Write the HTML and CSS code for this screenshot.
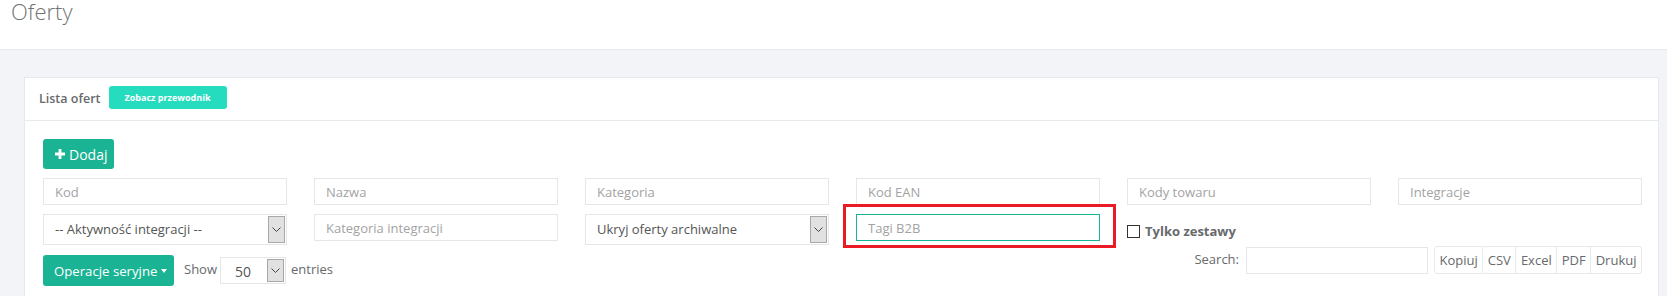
FILE: index.html
```html
<!DOCTYPE html>
<html lang="pl">
<head>
    <meta charset="UTF-8">
    <title>Oferty</title>
    <link rel="stylesheet" href="styles.css">
</head>
<body>

<!-- Page heading -->
<div class="page-heading">
    <h1>Oferty</h1>
</div>

<div class="wrapper">
    <div class="ibox">
        <div class="ibox-title">
            <h5>Lista ofert</h5>
            <button class="btn-guide">Zobacz przewodnik</button>
        </div>

        <div class="ibox-content">
            <button class="btn btn-primary btn-add">
                <svg class="icon-plus" width="10" height="10" viewBox="0 0 10 10"><path d="M3.6 0h2.8v3.6H10v2.8H6.4V10H3.6V6.4H0V3.6h3.6z" fill="#fff"/></svg>
                Dodaj
            </button>

            <!-- Filters -->
            <div class="filters">
                <input class="form-control" type="text" placeholder="Kod">
                <input class="form-control" type="text" placeholder="Nazwa">
                <input class="form-control" type="text" placeholder="Kategoria">
                <input class="form-control" type="text" placeholder="Kod EAN">
                <input class="form-control" type="text" placeholder="Kody towaru">
                <input class="form-control" type="text" placeholder="Integracje">

                <div class="select">
                    <span class="select-value">-- Aktywność integracji --</span>
                    <span class="select-arrow"><svg width="9" height="5" viewBox="0 0 9 5"><path d="M0.5 0.5l4 4 4-4" fill="none" stroke="#444" stroke-width="1"/></svg></span>
                </div>
                <input class="form-control" type="text" placeholder="Kategoria integracji">
                <div class="select">
                    <span class="select-value">Ukryj oferty archiwalne</span>
                    <span class="select-arrow"><svg width="9" height="5" viewBox="0 0 9 5"><path d="M0.5 0.5l4 4 4-4" fill="none" stroke="#444" stroke-width="1"/></svg></span>
                </div>
                <div class="highlight-cell">
                    <input class="form-control focused" type="text" placeholder="Tagi B2B">
                    <div class="highlight"></div>
                </div>
                <label class="checkbox">
                    <span class="check-box"></span>
                    Tylko zestawy
                </label>
            </div>

            <!-- Table tools -->
            <div class="table-tools">
                <div class="tools-left">
                    <button class="btn btn-primary btn-bulk">Operacje seryjne <span class="caret"></span></button>
                    <span class="length-label">Show</span>
                    <div class="select select-small">
                        <span class="select-value">50</span>
                        <span class="select-arrow"><svg width="9" height="5" viewBox="0 0 9 5"><path d="M0.5 0.5l4 4 4-4" fill="none" stroke="#444" stroke-width="1"/></svg></span>
                    </div>
                    <span class="length-label">entries</span>
                </div>
                <div class="tools-right">
                    <span class="search-label">Search:</span>
                    <input class="form-control search-input" type="search">
                    <div class="btn-group">
                        <button class="btn-export">Kopiuj</button>
                        <button class="btn-export">CSV</button>
                        <button class="btn-export">Excel</button>
                        <button class="btn-export">PDF</button>
                        <button class="btn-export">Drukuj</button>
                    </div>
                </div>
            </div>
        </div>
    </div>
</div>

</body>
</html>
```

FILE: styles.css
```css
body {
    margin: 0;
    font-family: "Open Sans", sans-serif;
    font-size: 13px;
    color: #676a6c;
    background-color: #f3f4f7;
}
.page-heading {
    height: 49px;
    background-color: #fff;
    border-bottom: 1px solid #e7eaec;
    padding-left: 11px;
}
.page-heading h1 {
    margin: 0;
    font-size: 22px;
    font-weight: 300;
    line-height: 23px;
    color: #707275;
}
.wrapper {
    padding: 27px 8px 0 24px;
}
.ibox {
    background-color: #fff;
    border: 1px solid #e7eaec;
    border-bottom: none;
}
.ibox-title {
    height: 42px;
    display: flex;
    align-items: center;
    padding: 0 14px;
    border-bottom: 1px solid #e7eaec;
}
.ibox-title h5 {
    margin: 0 8px 2px 0;
    font-size: 12.5px;
    font-weight: 600;
    color: #676a6c;
}
.btn-guide {
    height: 23px;
    width: 118px;
    margin-bottom: 3px;
    padding: 0;
    border: none;
    border-radius: 3px;
    background-color: #26dcbf;
    color: #fff;
    font-family: "Open Sans", sans-serif;
    font-size: 9px;
    font-weight: 700;
}
.ibox-content {
    padding: 18px 16px 20px 18px;
}
.btn {
    border: none;
    border-radius: 3px;
    color: #fff;
    font-family: "Open Sans", sans-serif;
    font-size: 14px;
    cursor: pointer;
}
.btn-primary {
    background-color: #1ab394;
}
.btn-add {
    display: flex;
    align-items: center;
    gap: 4px;
    height: 30px;
    width: 71px;
    padding: 0 0 0 12px;
}
.filters {
    margin-top: 9px;
    display: grid;
    grid-template-columns: repeat(6, 1fr);
    column-gap: 27px;
    row-gap: 9px;
    align-items: start;
}
.form-control {
    box-sizing: border-box;
    width: 100%;
    height: 27px;
    margin: 0;
    padding: 0 11px;
    border: 1px solid #e5e6e7;
    font-family: "Open Sans", sans-serif;
    font-size: 13px;
    color: #555;
    outline: none;
}
.form-control::placeholder {
    color: #a3a3a3;
}
.form-control.focused {
    border-color: #1ab394;
}
.select {
    box-sizing: border-box;
    height: 31px;
    display: flex;
    border: 1px solid #e5e6e7;
}
.select-value {
    flex: 1;
    padding-left: 11px;
    line-height: 29px;
    font-size: 13px;
    color: #555;
}
.select-arrow {
    width: 15px;
    margin: 1px 1px 1px 0;
    background-color: #e1e1e1;
    border: 1px solid #a8a8a8;
    display: flex;
    align-items: center;
    justify-content: center;
}
.highlight-cell {
    position: relative;
}
.highlight {
    position: absolute;
    left: -13px;
    right: -16px;
    top: -10px;
    height: 44px;
    box-sizing: border-box;
    border: 3px solid #ea1b24;
}
.checkbox {
    display: flex;
    align-items: center;
    gap: 5px;
    margin-top: 8px;
    font-weight: 700;
    color: #676a6c;
}
.check-box {
    box-sizing: border-box;
    width: 13px;
    height: 13px;
    border: 1px solid #333;
    background-color: #fff;
}
.table-tools {
    margin-top: 1px;
    display: flex;
    justify-content: space-between;
    align-items: flex-start;
}
.tools-left {
    display: flex;
    align-items: center;
    margin-top: 9px;
}
.btn-bulk {
    display: flex;
    align-items: center;
    gap: 4px;
    width: 131px;
    height: 31px;
    padding: 0 0 0 11px;
    font-size: 13.2px;
    white-space: nowrap;
    margin-right: 10px;
}
.caret {
    width: 0;
    height: 0;
    margin-top: 1px;
    border-top: 4px solid #fff;
    border-left: 3px solid transparent;
    border-right: 3px solid transparent;
}
.length-label {
    margin-bottom: 3px;
}
.select-small {
    width: 66px;
    height: 27px;
    margin: 0 5px 0 3px;
    background-color: #fff;
}
.select-small .select-value {
    padding-left: 14px;
    line-height: 27px;
    font-size: 14px;
}
.tools-right {
    display: flex;
    align-items: center;
}
.search-label {
    margin-right: 7px;
    margin-bottom: 2px;
}
.search-input {
    width: 182px;
    margin-right: 6px;
}
.btn-group {
    display: flex;
    height: 28px;
}
.btn-export {
    padding: 0 4.5px;
    border: 1px solid #e7eaec;
    border-left: none;
    background-color: #fff;
    color: #676a6c;
    font-family: "Open Sans", sans-serif;
    font-size: 13px;
}
.btn-export:first-child {
    border-left: 1px solid #e7eaec;
    border-radius: 3px 0 0 3px;
}
.btn-export:last-child {
    border-radius: 0 3px 3px 0;
}
```
